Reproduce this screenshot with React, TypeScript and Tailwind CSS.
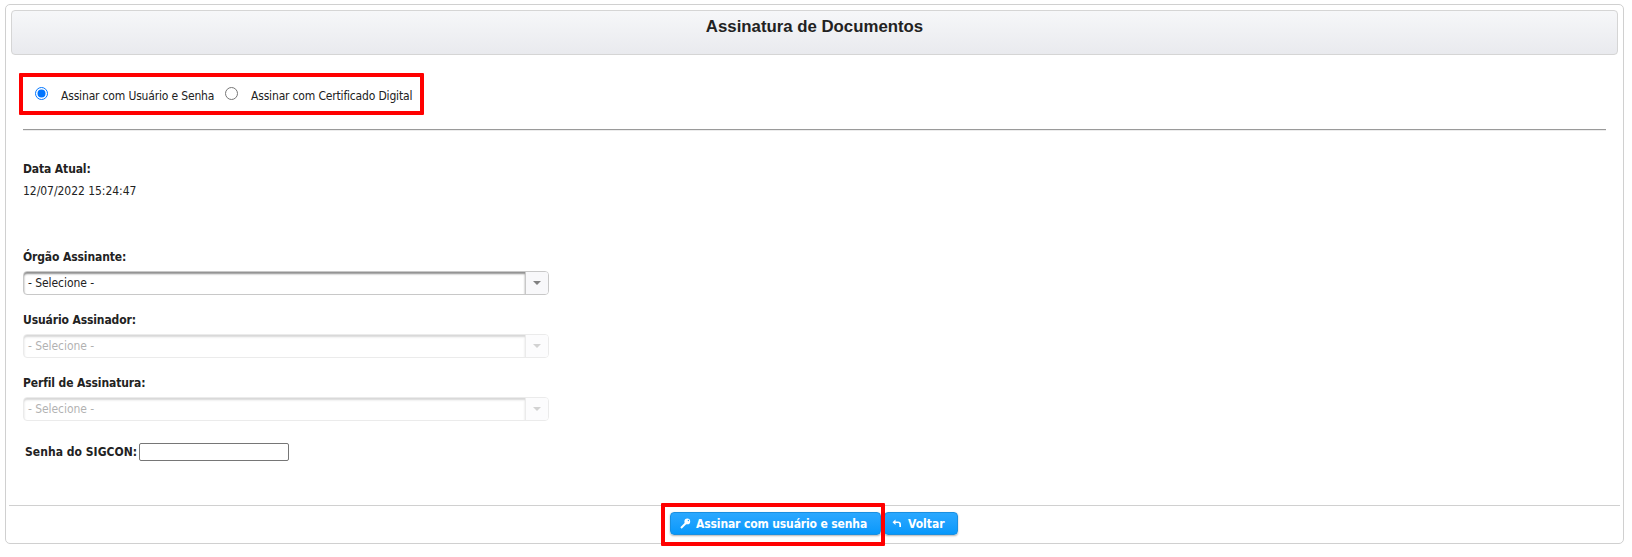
import React from "react";

function Select({ disabled = false }: { disabled?: boolean }) {
  return (
    <div
      className={`flex h-6 w-[526px] rounded-[4px] border border-[#c8c8c8] bg-white ${disabled ? "opacity-35" : ""}`}
    >
      <div className="flex-1 rounded-l-[3px] pl-1 text-[12px] leading-[23px] tracking-[-0.06px] shadow-[inset_0_2px_2px_#8f8f8f]">
        - Selecione -
      </div>
      <div className="flex w-[23px] items-center justify-center rounded-r-[3px] border-l border-[#c8c8c8] bg-[#f8f8fa]">
        <svg width="8" height="4" viewBox="0 0 8 4">
          <path d="M0 0h8L4 4z" fill="#808080" />
        </svg>
      </div>
    </div>
  );
}

function Label({ children }: { children: React.ReactNode }) {
  return <div className="h-5 text-[12px] leading-5 font-bold tracking-[-0.12px]">{children}</div>;
}

function Radio({ checked = false }: { checked?: boolean }) {
  return (
    <svg width="13" height="13" viewBox="0 0 13 13" className="mb-[1px] shrink-0">
      <circle cx="6.5" cy="6.5" r="6" fill="#fff" stroke={checked ? "#0075ff" : "#767676"} />
      {checked && <circle cx="6.5" cy="6.5" r="4" fill="#0075ff" />}
    </svg>
  );
}

const button =
  "flex h-[23px] items-center rounded-[4px] border border-[#1a8fe0] bg-linear-to-b from-[#2aa8ff] to-[#0598fb] text-[12px] font-bold text-white shadow-[0_1px_2px_rgba(0,0,0,0.3)] whitespace-nowrap";

export default function App() {
  return (
    <div className="h-[557px] bg-white pt-1 pl-[5px] font-['DejaVu_Sans_Condensed','DejaVu_Sans',sans-serif] text-[#222]">
      <div className="flex h-[540px] w-[1619px] flex-col rounded-[5px] border border-[#d0d0d0]">
        <div className="mx-[5px] mt-[5px] h-[45px] shrink-0 rounded-[4px] border border-[#d5d5d5] bg-linear-to-b from-[#f6f7f9] to-[#e9eaee] pt-[3px] text-center font-['Liberation_Sans',Arial,sans-serif] text-[16.8px] leading-[25px] font-bold">
          <h1>Assinatura de Documentos</h1>
        </div>
        <div className="mt-[18px] ml-[13px] flex h-[42px] w-[405px] shrink-0 items-center rounded-[1px] border-4 border-[#ff0000] pl-3 text-[12px] tracking-[-0.17px] whitespace-nowrap">
          <Radio checked />
          <div className="ml-[13px] w-[154px] pt-[3px]">Assinar com Usuário e Senha</div>
          <div className="ml-[10px] flex items-center">
            <Radio />
            <div className="ml-[13px] pt-[3px]">Assinar com Certificado Digital</div>
          </div>
        </div>
        <div className="mt-[14px] mr-[17px] ml-[17px] h-[2px] shrink-0 border-t border-b border-t-[#9a9a9a] border-b-[#ececec]" />
        <div className="mt-7 flex h-[346px] shrink-0 flex-col pl-[17px]">
          <Label>Data Atual:</Label>
          <div className="mt-[2px] text-[12px] leading-5 tracking-[-0.04px]">12/07/2022 15:24:47</div>
          <div className="mt-[46px]"><Label>Órgão Assinante:</Label></div>
          <div className="mt-1"><Select /></div>
          <div className="mt-[15px]"><Label>Usuário Assinador:</Label></div>
          <div className="mt-1"><Select disabled /></div>
          <div className="mt-[15px]"><Label>Perfil de Assinatura:</Label></div>
          <div className="mt-1"><Select disabled /></div>
          <div className="mt-[21px] flex items-center pl-0.5">
            <div className="h-5 w-[114px] text-[12px] leading-5 font-bold tracking-[0.04px] whitespace-nowrap">Senha do SIGCON:</div>
            <input type="password" className="h-[18px] w-[150px] rounded-[2px] border border-[#767676] bg-white" />
          </div>
        </div>
        <div className="relative mx-[3px] flex h-[38px] shrink-0 border-t border-[#d0d0d0] pt-[6px] pl-[661px]">
          <button className={`${button} w-[211px] pl-[9px] tracking-[-0.13px]`}>
            <svg width="11" height="11" viewBox="0 0 11 11" className="mr-[5px]">
              <path d="M1 10 6 5" stroke="#fff" strokeWidth="2" />
              <path fillRule="evenodd" d="M7.3 .5a2.9 2.9 0 1 0 0 5.8 2.9 2.9 0 0 0 0-5.8zM8.4 1.8a.7.7 0 1 1 0 1.4.7.7 0 0 1 0-1.4z" fill="#fff" />
            </svg>
            Assinar com usuário e senha
          </button>
          <button className={`${button} ml-[3px] w-[74px] pl-[7px]`}>
            <svg width="10" height="9" viewBox="0 0 10 9" className="mr-[6px]">
              <path d="M3.5 .5v2H6c2 0 3 1.2 3 3V8H7.3V5.6c0-1-.4-1.5-1.4-1.5H3.5v2L.5 3.3z" fill="#fff" />
            </svg>
            Voltar
          </button>
          <div className="absolute top-[-3px] left-[652px] h-[43px] w-[224px] rounded-[1px] border-4 border-[#ff0000]" />
        </div>
      </div>
    </div>
  );
}
